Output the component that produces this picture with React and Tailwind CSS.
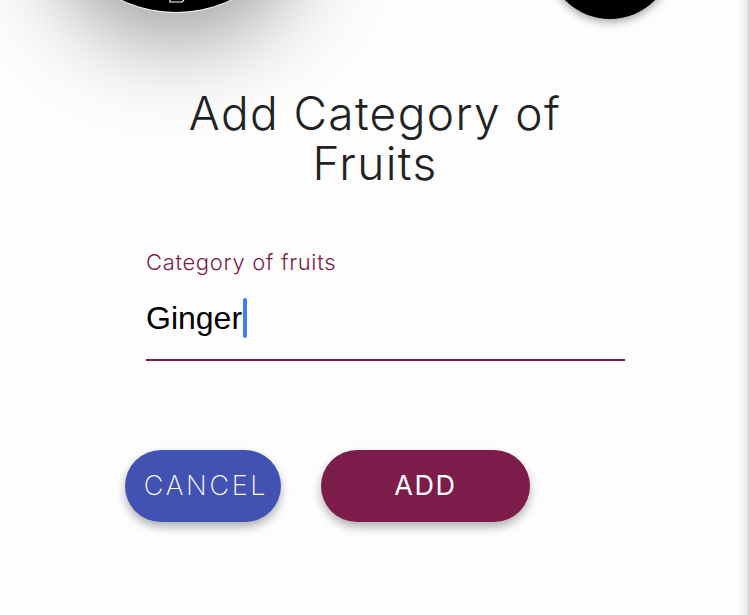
import React from 'react';

const Avatar = () => (
  <div className="absolute left-[46px] top-[-247px] flex h-[260px] w-[260px] items-end justify-center overflow-hidden rounded-full border border-white bg-black shadow-[0_30px_90px_rgba(0,0,0,0.38)]">
    <svg width="80" height="20" viewBox="0 0 80 20" className="mb-[-2px]">
      <path d="M10 0 L8 4" stroke="#fff" strokeWidth="1.2" fill="none" />
      <path d="M34 0 L34 8 L46 8 Q50 5 47 0" stroke="#fff" strokeWidth="1.2" fill="none" />
    </svg>
  </div>
);

const ActionButton = ({ label, className, textClass }) => (
  <button
    type="button"
    className={`flex h-[72px] items-center justify-center rounded-full shadow-[0_5px_10px_rgba(0,0,0,0.3)] ${className}`}
  >
    <span className={`text-[27px] text-white ${textClass}`}>{label}</span>
  </button>
);

export default function App() {
  return (
    <div
      className="relative flex h-[615px] w-[750px] flex-col overflow-hidden bg-[#fdfdfd]"
      style={{ fontFamily: 'Inter, "Liberation Sans", sans-serif' }}
    >
      <h1 className="mt-[88px] text-center text-[46px] font-light leading-[50px] tracking-[0.03em] text-[#222]">
        Add Category of
        <br />
        Fruits
      </h1>

      <div className="ml-[146px] mt-[60px] w-[479px]">
        <label className="block text-[22px] font-light leading-[28px] tracking-[0.03em] text-[#7b1e4a]">
          Category of fruits
        </label>
        <div className="mt-[22px] box-content flex h-[40px] items-center border-b-2 border-[#7b1c4a] pb-[21px]">
          <span
            className="text-[32px] leading-[36px] text-black"
            style={{ fontFamily: '"Liberation Sans", Arial, sans-serif' }}
          >
            Ginger
          </span>
          <span className="ml-[1px] h-[40px] w-[4px] rounded-[2px] bg-[#3a7ff6]" />
        </div>
      </div>

      <div className="ml-[125px] mt-[89px] flex gap-[40px]">
        <ActionButton
          label="CANCEL"
          className="w-[156px] bg-[#4152b3] pl-[6px]"
          textClass="font-extralight tracking-[0.1em]"
        />
        <ActionButton label="ADD" className="w-[209px] bg-[#7b1c4a]" textClass="font-normal tracking-[0.06em]" />
      </div>

      <div className="absolute right-0 top-0 h-full w-[12px] bg-[linear-gradient(to_right,rgba(253,253,253,0),#ececec_70%,#cfcfcf_92%,#e2e2e2)]" />

      <Avatar />
      <div className="absolute left-[547px] top-[-107px] h-[126px] w-[126px] rounded-full bg-black shadow-[0_3px_8px_rgba(0,0,0,0.35)]" />
    </div>
  );
}
